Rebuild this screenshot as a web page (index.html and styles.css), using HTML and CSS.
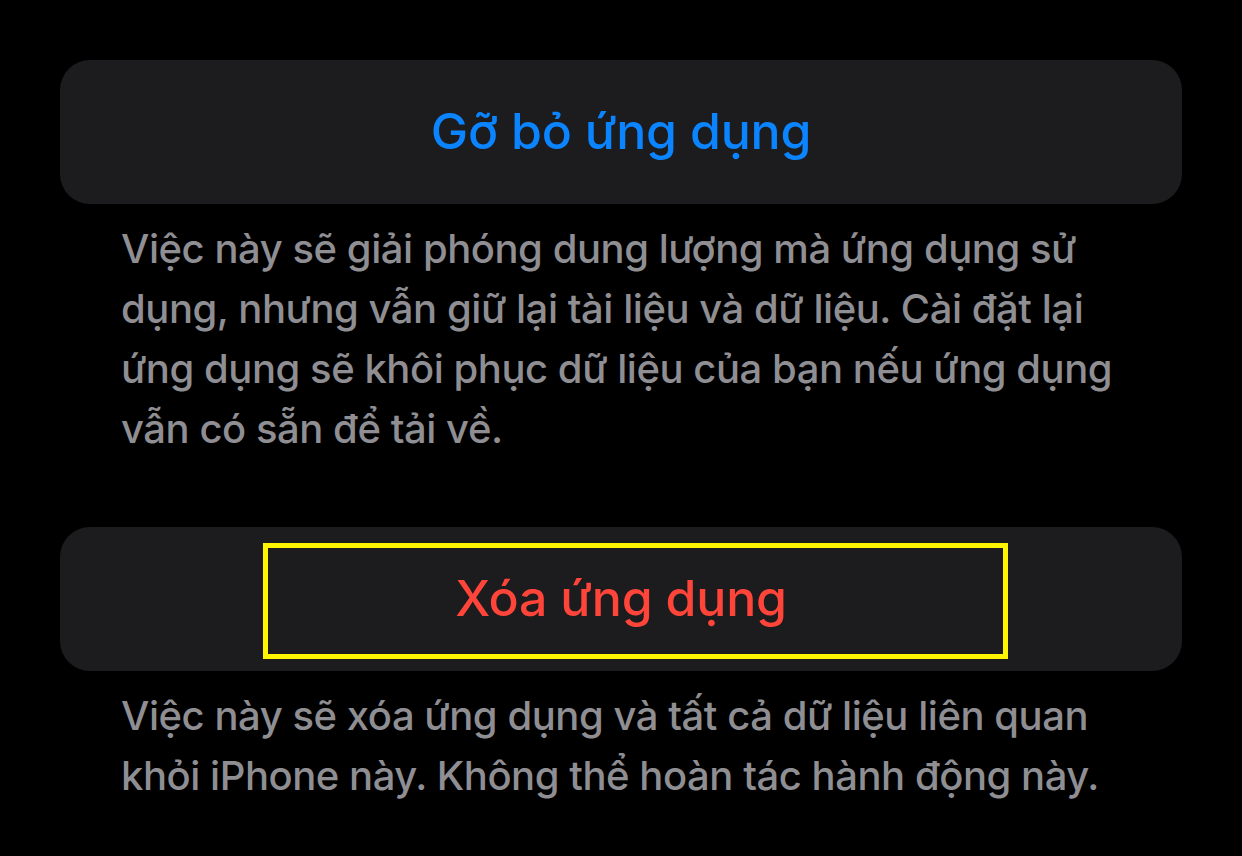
FILE: index.html
```html
<!DOCTYPE html>
<html lang="vi">
<head>
    <meta charset="UTF-8">
    <meta name="viewport" content="width=device-width, initial-scale=1.0">
    <title>Ứng dụng</title>
    <link rel="stylesheet" href="styles.css">
</head>
<body>
    <div class="settings">
        <div class="group">
            <button class="action offload">Gỡ bỏ ứng dụng</button>
            <p class="footer">Việc này sẽ giải phóng dung lượng mà ứng dụng sử dụng, nhưng vẫn giữ lại tài liệu và dữ liệu. Cài đặt lại ứng dụng sẽ khôi phục dữ liệu của bạn nếu ứng dụng vẫn có sẵn để tải về.</p>
        </div>

        <div class="group">
            <button class="action delete">
                Xóa ứng dụng
                <span class="highlight"></span>
            </button>
            <p class="footer">Việc này sẽ xóa ứng dụng và tất cả dữ liệu liên quan khỏi iPhone này. Không thể hoàn tác hành động này.</p>
        </div>
    </div>
</body>
</html>
```

FILE: styles.css
```css
body {
    margin: 0;
    padding: 60px;
    background-color: #000;
    font-family: Inter, "Noto Sans", sans-serif;
    -webkit-font-smoothing: antialiased;
}
.settings {
    display: flex;
    flex-direction: column;
    gap: 68px;
}
.action {
    position: relative;
    display: block;
    width: 100%;
    height: 144px;
    padding: 0 0 2px;
    border: none;
    border-radius: 30px;
    background-color: #1c1c1e;
    font-family: inherit;
    font-size: 50px;
    font-weight: 500;
    letter-spacing: -0.2px;
    text-align: center;
    cursor: pointer;
}
.offload {
    color: #0a84ff;
}
.delete {
    color: #ff453a;
}
.highlight {
    position: absolute;
    left: 203px;
    top: 16px;
    width: 745px;
    height: 116px;
    box-sizing: border-box;
    border: 5px solid #fff500;
}
.footer {
    margin: 15px 0 0;
    padding: 0 50px 0 61px;
    color: #8e8e93;
    font-size: 40px;
    font-weight: 500;
    line-height: 60px;
    letter-spacing: -0.45px;
}
```
